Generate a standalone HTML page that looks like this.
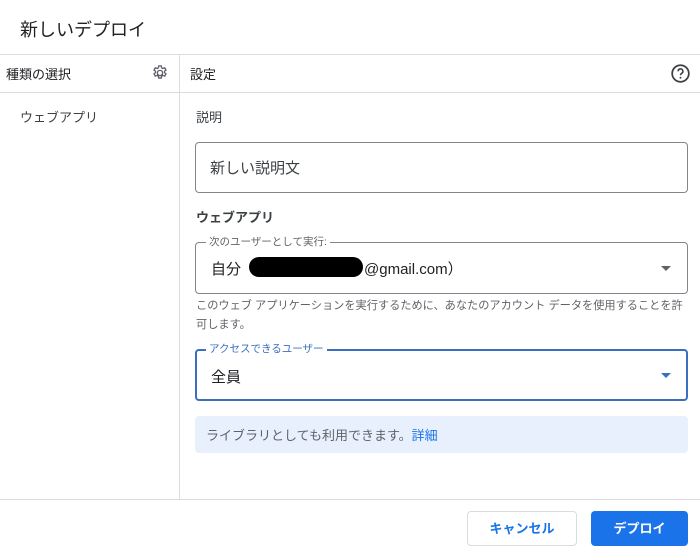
<!DOCTYPE html>
<html><head><meta charset="utf-8"><style>
*{margin:0;padding:0;box-sizing:border-box}
body{width:700px;height:551px;background:#fff;font-family:"Liberation Sans","Noto Sans CJK JP",sans-serif;color:#202124;position:relative;overflow:hidden}
.a{position:absolute;white-space:nowrap}
.hl{position:absolute;left:0;width:700px;height:1px;background:#dadce0}
.box{position:absolute;border:1px solid #80868b;border-radius:4px}
.lab{position:absolute;background:#fff;padding:0 3px;font-size:10.5px;color:#5f6368;line-height:12px}
.arr{position:absolute;width:0;height:0;border-left:5px solid transparent;border-right:5px solid transparent;border-top:5px solid #5f6368}
</style></head><body>
<div class="a" style="left:20px;top:16px;font-size:18px;">新しいデプロイ</div>
<div class="hl" style="top:54px"></div>
<div class="hl" style="top:92px"></div>
<div class="hl" style="top:499px"></div>
<div style="position:absolute;left:179px;top:54px;width:1px;height:445px;background:#dadce0"></div>
<div class="a" style="left:6px;top:64px;font-size:13px;">種類の選択</div>
<svg class="a" style="left:151px;top:64px" width="18" height="18" viewBox="0 0 24 24"><path fill="none" stroke="#5f6368" stroke-width="1.8" d="M12 8.5a3.5 3.5 0 1 0 0 7a3.5 3.5 0 1 0 0-7zM10.3 2.5h3.4l.5 2.6 1.6.9 2.5-.9 1.7 2.9-2 1.7v1.8l2 1.7-1.7 2.9-2.5-.9-1.6.9-.5 2.6h-3.4l-.5-2.6-1.6-.9-2.5.9-1.7-2.9 2-1.7v-1.8l-2-1.7 1.7-2.9 2.5.9 1.6-.9z"/></svg>
<div class="a" style="left:190px;top:64px;font-size:13px;">設定</div>
<svg class="a" style="left:670px;top:63px" width="21" height="21" viewBox="0 0 24 24"><circle cx="12" cy="12" r="9.5" fill="none" stroke="#3c4043" stroke-width="2"/><path d="M9.3 9.5a2.7 2.7 0 1 1 4 2.3c-.8.5-1.3 1-1.3 2.2" fill="none" stroke="#3c4043" stroke-width="1.8"/><circle cx="12" cy="16.8" r="1.1" fill="#3c4043"/></svg>
<div class="a" style="left:20px;top:107px;font-size:13px;color:#3c4043">ウェブアプリ</div>
<div class="a" style="left:196px;top:107px;font-size:13px;color:#3c4043">説明</div>
<div class="box" style="left:195px;top:142px;width:493px;height:51px"></div>
<div class="a" style="left:210px;top:157px;font-size:15px;color:#3c4043">新しい説明文</div>
<div class="a" style="left:196px;top:207px;font-size:13px;font-weight:bold;color:#3c4043">ウェブアプリ</div>
<div class="box" style="left:195px;top:242px;width:493px;height:52px"></div>
<div class="lab" style="left:206px;top:236px">次のユーザーとして実行:</div>
<div class="a" style="left:211px;top:258px;font-size:15px">自分</div>
<div class="a" style="left:249px;top:257px;width:114px;height:20px;background:#000;border-radius:10px"></div>
<div class="a" style="left:364px;top:258px;font-size:15px">@gmail.com）</div>
<div class="arr" style="left:661px;top:266px"></div>
<div class="a" style="left:196px;top:297px;font-size:11.2px;color:#5f6368;line-height:19px">このウェブ アプリケーションを実行するために、あなたのアカウント データを使用することを許<br>可します。</div>
<div class="box" style="left:195px;top:349px;width:493px;height:52px;border:2px solid #3a6fc0"></div>
<div class="lab" style="left:206px;top:343px;color:#3a6fc0">アクセスできるユーザー</div>
<div class="a" style="left:211px;top:366px;font-size:15px">全員</div>
<div class="arr" style="left:661px;top:373px;border-top-color:#3a6fc0"></div>
<div class="a" style="left:195px;top:416px;width:493px;height:37px;background:#e8f0fe;border-radius:4px"></div>
<div class="a" style="left:206px;top:425px;font-size:13px;color:#5f6368">ライブラリとしても利用できます。<span style="color:#1a73e8">詳細</span></div>
<div class="a" style="left:467px;top:511px;width:110px;height:35px;border:1px solid #dadce0;border-radius:4px;font-size:13px;font-weight:bold;color:#1a73e8;text-align:center;line-height:33px">キャンセル</div>
<div class="a" style="left:591px;top:511px;width:97px;height:35px;background:#1a73e8;border-radius:4px;font-size:13px;font-weight:bold;color:#fff;text-align:center;line-height:35px">デプロイ</div>
</body></html>
